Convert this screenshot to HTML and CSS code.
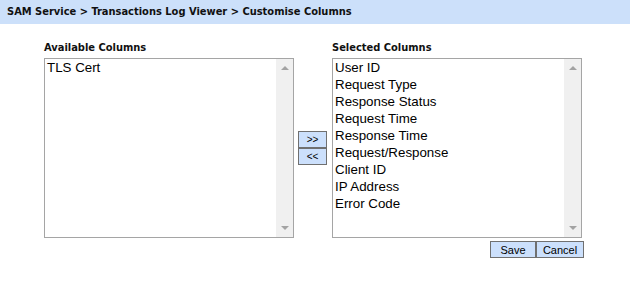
FILE: index.html
```html
<!DOCTYPE html>
<html lang="en">
  <head>
    <meta charset="UTF-8" />
    <title>Customise Columns</title>
    <link rel="stylesheet" href="styles.css">
  </head>
  <body>
    <div class="breadcrumb">SAM Service &gt; Transactions Log Viewer &gt; Customise Columns</div>

    <main class="picker">
      <div class="column">
        <div class="col-label">Available Columns</div>
        <div class="listbox">
          <ul class="items">
            <li>TLS Cert</li>
          </ul>
          <div class="scroll">
            <span class="arrow-up"></span>
            <span class="arrow-down"></span>
          </div>
        </div>
      </div>

      <div class="movers">
        <button type="button" class="btn">&gt;&gt;</button>
        <button type="button" class="btn">&lt;&lt;</button>
      </div>

      <div class="column">
        <div class="col-label">Selected Columns</div>
        <div class="listbox">
          <ul class="items">
            <li>User ID</li>
            <li>Request Type</li>
            <li>Response Status</li>
            <li>Request Time</li>
            <li>Response Time</li>
            <li>Request/Response</li>
            <li>Client ID</li>
            <li>IP Address</li>
            <li>Error Code</li>
          </ul>
          <div class="scroll">
            <span class="arrow-up"></span>
            <span class="arrow-down"></span>
          </div>
        </div>
        <div class="actions">
          <button type="button" class="btn btn-save">Save</button>
          <button type="button" class="btn btn-cancel">Cancel</button>
        </div>
      </div>
    </main>
  </body>
</html>
```

FILE: styles.css
```css
* {
  margin: 0;
  padding: 0;
  box-sizing: border-box;
}

body {
  font-family: "Liberation Sans", Arial, sans-serif;
  background-color: #fff;
  color: #000;
}

.breadcrumb {
  height: 24px;
  line-height: 24px;
  padding-left: 7px;
  background-color: #cce0fa;
  font-family: "DejaVu Sans Condensed", "DejaVu Sans", sans-serif;
  font-stretch: condensed;
  font-weight: bold;
  font-size: 11px;
  color: #111;
}

.picker {
  display: flex;
  padding: 16px 0 0 44px;
}

.col-label {
  height: 16px;
  line-height: 16px;
  margin-bottom: 2px;
  font-family: "DejaVu Sans Condensed", "DejaVu Sans", sans-serif;
  font-stretch: condensed;
  font-weight: bold;
  font-size: 11px;
  color: #111;
}

.listbox {
  display: flex;
  width: 250px;
  height: 180px;
  border: 1px solid #a5a5a5;
  background-color: #fff;
}

.items {
  flex-grow: 1;
  list-style: none;
  padding-left: 2px;
  font-size: 13.33px;
  line-height: 17px;
}

.scroll {
  width: 17px;
  background-color: #f0f0f0;
  display: flex;
  flex-direction: column;
  justify-content: space-between;
  align-items: center;
  padding: 7px 0 7px;
}

.arrow-up {
  width: 0;
  height: 0;
  border-left: 4px solid transparent;
  border-right: 4px solid transparent;
  border-bottom: 4px solid #a3a3a3;
}

.arrow-down {
  width: 0;
  height: 0;
  border-left: 4px solid transparent;
  border-right: 4px solid transparent;
  border-top: 4px solid #a3a3a3;
}

.movers {
  display: flex;
  flex-direction: column;
  margin: 91px 5px 0 4px;
}

.btn {
  height: 17px;
  border: 1px solid #707070;
  background-color: #cce0fc;
  font-family: "Liberation Sans", Arial, sans-serif;
  font-size: 11px;
  color: #000;
  cursor: pointer;
}

.movers .btn {
  width: 29px;
  font-size: 10px;
}

.actions {
  display: flex;
  justify-content: flex-end;
  margin: 3px -2px 0 0;
}

.btn-save {
  width: 46px;
}

.btn-cancel {
  width: 48px;
}
```
